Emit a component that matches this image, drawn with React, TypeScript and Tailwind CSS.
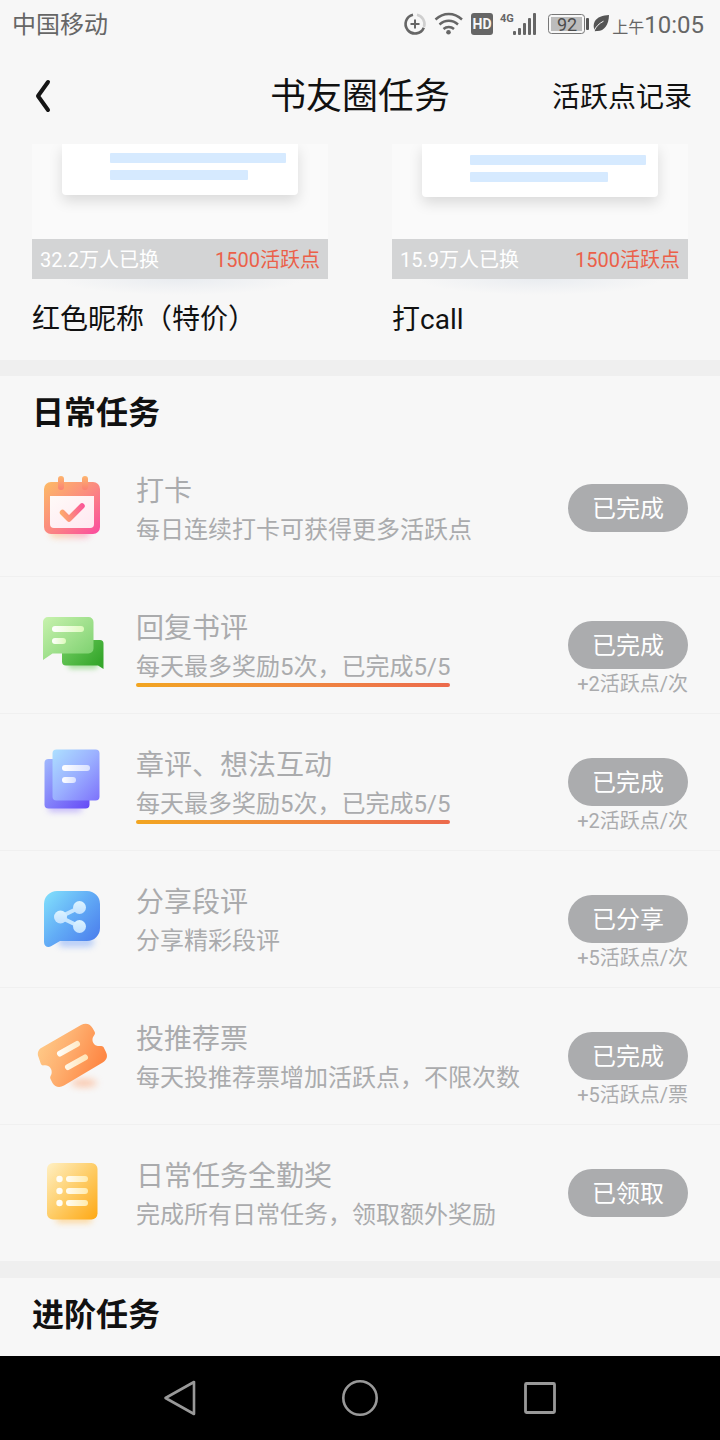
import type { ReactNode } from "react";

type Task = {
  title: string;
  detail: string;
  status: string;
  reward?: string;
  underlined?: boolean;
  icon: ReactNode;
};

function CalendarIcon() {
  return (
    <svg viewBox="0 0 96 96" className="size-24 shrink-0" aria-hidden="true">
      <defs>
        <linearGradient id="cal-body" x1="0" y1="0" x2="1" y2="1">
          <stop offset="0" stopColor="#fdbb65" />
          <stop offset="0.5" stopColor="#fb8a80" />
          <stop offset="1" stopColor="#fb4aa0" />
        </linearGradient>
        <linearGradient id="cal-page" x1="0" y1="0" x2="1" y2="1">
          <stop offset="0" stopColor="#fffaf8" />
          <stop offset="1" stopColor="#ffe8f1" />
        </linearGradient>
        <linearGradient id="cal-ring" x1="0" y1="0" x2="0" y2="1">
          <stop offset="0" stopColor="#fdb56e" />
          <stop offset="1" stopColor="#fb8173" />
        </linearGradient>
        <linearGradient id="cal-shade" x1="0" y1="0" x2="1" y2="0">
          <stop offset="0" stopColor="#fdc580" />
          <stop offset="1" stopColor="#fb8ab5" />
        </linearGradient>
        <linearGradient id="cal-check" gradientUnits="userSpaceOnUse" x1="36" y1="52" x2="60" y2="46">
          <stop offset="0" stopColor="#fdac6c" />
          <stop offset="1" stopColor="#fb5598" />
        </linearGradient>
        <filter id="cal-blur" x="-30%" y="-60%" width="160%" height="240%">
          <feGaussianBlur stdDeviation="3" />
        </filter>
      </defs>
      <rect x="26" y="68" width="40" height="10" rx="5" fill="url(#cal-shade)" opacity="0.6" filter="url(#cal-blur)" />
      <rect x="20" y="22" width="56" height="52" rx="7" fill="url(#cal-body)" />
      <path d="M26 36h44v28a4 4 0 0 1-4 4H30a4 4 0 0 1-4-4z" fill="url(#cal-page)" />
      <rect x="34" y="16" width="6" height="14" rx="3" fill="url(#cal-ring)" />
      <rect x="58" y="16" width="6" height="14" rx="3" fill="url(#cal-ring)" />
      <path d="M38.500 52.500l6.500 6.500 13-13" fill="none" stroke="url(#cal-check)" strokeWidth="5.500" strokeLinecap="round" strokeLinejoin="round" />
    </svg>
  );
}

function ReplyIcon() {
  return (
    <svg viewBox="0 -3 96 96" className="size-24 shrink-0" aria-hidden="true">
      <defs>
        <linearGradient id="rep-front" x1="0" y1="0" x2="1" y2="1">
          <stop offset="0" stopColor="#c8f2ae" />
          <stop offset="1" stopColor="#79cf6c" />
        </linearGradient>
        <linearGradient id="rep-back" x1="0" y1="0" x2="1" y2="0.600">
          <stop offset="0" stopColor="#72cd62" />
          <stop offset="1" stopColor="#36a72c" />
        </linearGradient>
        <linearGradient id="rep-line" x1="0" y1="0" x2="1" y2="0">
          <stop offset="0" stopColor="#ffffff" />
          <stop offset="1" stopColor="#ddfabb" />
        </linearGradient>
        <filter id="rep-blur" x="-30%" y="-80%" width="160%" height="260%">
          <feGaussianBlur stdDeviation="2.500" />
        </filter>
      </defs>
      <rect x="44" y="60" width="30" height="9" rx="4" fill="#8fd783" opacity="0.700" filter="url(#rep-blur)" />
      <path d="M41 40h35a3.500 3.500 0 0 1 3.500 3.500V69L74 65.500H42a4 4 0 0 1-4-4V43a3 3 0 0 1 3-3z" fill="url(#rep-back)" />
      <path d="M24 17h40.500a5 5 0 0 1 5 5v26.500a5 5 0 0 1-5 5H28.500L19 60V22a5 5 0 0 1 5-5z" fill="url(#rep-front)" />
      <rect x="28" y="26" width="32" height="6" rx="3" fill="url(#rep-line)" />
      <rect x="28" y="38" width="14" height="6" rx="3" fill="url(#rep-line)" />
    </svg>
  );
}

function ChapterIcon() {
  return (
    <svg viewBox="0 -1 96 96" className="size-24 shrink-0" aria-hidden="true">
      <defs>
        <linearGradient id="chap-front" x1="0" y1="0" x2="1" y2="1">
          <stop offset="0" stopColor="#ade0ff" />
          <stop offset="0.500" stopColor="#9bb0ff" />
          <stop offset="1" stopColor="#7d72fb" />
        </linearGradient>
        <linearGradient id="chap-back" x1="0" y1="0" x2="1" y2="1">
          <stop offset="0" stopColor="#a1b9fd" />
          <stop offset="1" stopColor="#6549f6" />
        </linearGradient>
        <linearGradient id="chap-line" x1="0" y1="0" x2="1" y2="0">
          <stop offset="0" stopColor="#ffffff" />
          <stop offset="1" stopColor="#d8e0ff" />
        </linearGradient>
        <filter id="chap-blur" x="-30%" y="-80%" width="160%" height="260%">
          <feGaussianBlur stdDeviation="3" />
        </filter>
      </defs>
      <rect x="24" y="69" width="34" height="8" rx="4" fill="#b0a0fb" opacity="0.700" filter="url(#chap-blur)" />
      <rect x="20.500" y="24" width="45" height="49.500" rx="4" fill="url(#chap-back)" />
      <rect x="28.500" y="14.500" width="47" height="51" rx="4" fill="url(#chap-front)" />
      <rect x="38" y="30" width="28" height="6" rx="3" fill="url(#chap-line)" />
      <rect x="38" y="42" width="14" height="6" rx="3" fill="url(#chap-line)" />
    </svg>
  );
}

function ShareIcon() {
  return (
    <svg viewBox="0 -1 96 96" className="size-24 shrink-0" aria-hidden="true">
      <defs>
        <linearGradient id="share-body" x1="0" y1="0" x2="1" y2="0.900">
          <stop offset="0" stopColor="#83e2fc" />
          <stop offset="0.500" stopColor="#62acf6" />
          <stop offset="1" stopColor="#4a7bec" />
        </linearGradient>
        <linearGradient id="share-node" x1="0" y1="0" x2="0" y2="1">
          <stop offset="0" stopColor="#dcf3ff" />
          <stop offset="1" stopColor="#c2e1ff" />
        </linearGradient>
        <filter id="share-blur" x="-30%" y="-80%" width="160%" height="260%">
          <feGaussianBlur stdDeviation="3" />
        </filter>
      </defs>
      <rect x="34" y="65" width="36" height="10" rx="5" fill="#9cbcf8" opacity="0.700" filter="url(#share-blur)" />
      <path d="M33 19h30a13 13 0 0 1 13 13v24a13 13 0 0 1-13 13H36l-9 5.200C24 76 20 74.500 20 70V32a13 13 0 0 1 13-13z" fill="url(#share-body)" />
      <path d="M55.500 35.500L36 45l19.500 9.500" fill="none" stroke="#c6e6ff" strokeWidth="4" />
      <circle cx="55.500" cy="35.500" r="6.500" fill="url(#share-node)" />
      <circle cx="36.500" cy="45" r="6.500" fill="url(#share-node)" />
      <circle cx="55.500" cy="54.500" r="6.500" fill="url(#share-node)" />
    </svg>
  );
}

function TicketIcon() {
  return (
    <svg viewBox="0 0 96 96" className="size-24 shrink-0" aria-hidden="true">
      <defs>
        <linearGradient id="tick-body" x1="0" y1="0" x2="1" y2="0.400">
          <stop offset="0" stopColor="#ffd28f" />
          <stop offset="0.500" stopColor="#feb070" />
          <stop offset="1" stopColor="#fe8845" />
        </linearGradient>
        <linearGradient id="tick-line" gradientUnits="userSpaceOnUse" x1="34" y1="50" x2="64" y2="50">
          <stop offset="0" stopColor="#fffdf8" />
          <stop offset="1" stopColor="#ffe3b4" />
        </linearGradient>
        <filter id="tick-blur" x="-40%" y="-80%" width="180%" height="260%">
          <feGaussianBlur stdDeviation="3.500" />
        </filter>
      </defs>
      <ellipse cx="60" cy="75" rx="13" ry="4" fill="#fda87a" opacity="0.600" filter="url(#tick-blur)" />
      <path
        d="M18 39.500L57 17c4.500-2.500 9-1.500 11.500 3l2 3.500c1 2 .5 2.800-.8 4.500-2.500 3.500-1 8.500 3.300 9.800 2.300.7 4.500-.8 6.500 1.200l2.200 4.500c2.500 4.500 1.300 8.500-3 11L40 77.500c-4.500 2.600-9 1.500-11.500-2.500l-2-4c-1-2 .3-3 1-5 1.300-5-2.500-9.500-7.500-8.700-2 .3-2.500-.3-3.300-1.800L14.500 49c-1.500-3.500-.5-7.500 3.500-9.500z"
        fill="url(#tick-body)"
      />
      <path d="M36 45.500L53 36M44 59L61 49.500" stroke="url(#tick-line)" strokeWidth="6" strokeLinecap="round" />
    </svg>
  );
}

function ListIcon() {
  return (
    <svg viewBox="0 0 96 96" className="size-24 shrink-0" aria-hidden="true">
      <defs>
        <linearGradient id="list-body" x1="0" y1="0" x2="1" y2="1">
          <stop offset="0" stopColor="#fff0c4" />
          <stop offset="0.500" stopColor="#fecd68" />
          <stop offset="1" stopColor="#fea814" />
        </linearGradient>
        <linearGradient id="list-line" gradientUnits="userSpaceOnUse" x1="42" y1="0" x2="64" y2="0">
          <stop offset="0" stopColor="#fffdf5" />
          <stop offset="1" stopColor="#ffebae" />
        </linearGradient>
        <filter id="list-blur" x="-30%" y="-80%" width="160%" height="260%">
          <feGaussianBlur stdDeviation="3" />
        </filter>
      </defs>
      <rect x="32" y="70" width="36" height="8" rx="4" fill="#fecb78" opacity="0.700" filter="url(#list-blur)" />
      <rect x="23" y="18" width="50.500" height="56.500" rx="6" fill="url(#list-body)" />
      {[34, 46, 58].map((y) => (
        <g key={y}>
          <circle cx="35.500" cy={y} r="3.200" fill="#fffdf5" />
          <rect x="42" y={y - 3} width="22" height="6" rx="3" fill="url(#list-line)" />
        </g>
      ))}
    </svg>
  );
}

const tasks: Task[] = [
  { title: "打卡", detail: "每日连续打卡可获得更多活跃点", status: "已完成", icon: <CalendarIcon /> },
  { title: "回复书评", detail: "每天最多奖励5次，已完成5/5", status: "已完成", reward: "+2活跃点/次", underlined: true, icon: <ReplyIcon /> },
  { title: "章评、想法互动", detail: "每天最多奖励5次，已完成5/5", status: "已完成", reward: "+2活跃点/次", underlined: true, icon: <ChapterIcon /> },
  { title: "分享段评", detail: "分享精彩段评", status: "已分享", reward: "+5活跃点/次", icon: <ShareIcon /> },
  { title: "投推荐票", detail: "每天投推荐票增加活跃点，不限次数", status: "已完成", reward: "+5活跃点/票", icon: <TicketIcon /> },
  { title: "日常任务全勤奖", detail: "完成所有日常任务，领取额外奖励", status: "已领取", icon: <ListIcon /> },
];

function StatusBar() {
  return (
    <div className="flex h-12 items-center justify-between pr-4 pl-3 text-[#666]">
      <span className="pt-0.5 text-2xl">中国移动</span>
      <div className="flex items-center">
        <svg viewBox="0 0 208 30" className="h-[30px] w-[208px]" aria-hidden="true">
          <g fill="none" stroke="#666" strokeWidth="2.600">
            <path d="M11 5.700a9.500 9.500 0 1 0 10.800 13" />
            <path d="M15 5.700a9.500 9.500 0 0 1 7 12.300" stroke="#cfcfcf" />
            <path d="M13 10.500v9M8.500 15h9" strokeWidth="2" />
            <path d="M33.500 10.500c8-7.300 18.500-7.300 26.500 0" strokeWidth="2.400" />
            <path d="M37.500 15.500c5.500-5 13-5 18.500 0" strokeWidth="2.400" />
            <path d="M41.500 20c3-2.700 7.500-2.700 10.500 0" strokeWidth="2.400" />
          </g>
          <circle cx="46.500" cy="23.300" r="2.300" fill="#666" />
          <rect x="69" y="4" width="22" height="22" rx="3" fill="#666" />
          <text x="80" y="20" textAnchor="middle" fill="#f7f7f7" fontFamily="Roboto, sans-serif" fontWeight="700" fontSize="14">HD</text>
          <text x="98" y="13" fill="#666" fontFamily="Roboto, sans-serif" fontWeight="700" fontSize="11">4G</text>
          <g fill="#666">
            <rect x="111" y="22" width="3" height="4" rx="1" />
            <rect x="116" y="19" width="3" height="7" rx="1" />
            <rect x="121" y="14" width="3" height="12" rx="1" />
            <rect x="126" y="9" width="3" height="17" rx="1" />
            <rect x="131" y="4" width="3" height="22" rx="1" />
          </g>
          <rect x="146.500" y="5.500" width="36" height="19" rx="3" fill="none" stroke="#777" />
          <rect x="149" y="8" width="31" height="14" fill="#bcbcbc" />
          <rect x="184" y="9" width="3" height="12" rx="1" fill="#555" />
          <text x="165" y="21.500" textAnchor="middle" fill="#4c4c4c" fontFamily="Roboto, sans-serif" fontSize="18">92</text>
          <path d="M207 6c-6 .3-12 2-14.300 6.500-1.500 3-1.200 6-.2 8.500l.3 1.200 2-.2c7 .5 12-5.500 12.200-16z" fill="#555" />
          <path d="M192 22c2-4.500 5-7.500 9.500-9.800" fill="none" stroke="#f7f7f7" strokeWidth="1" />
        </svg>
        <span className="pt-0.5 pl-0.5 text-base leading-7">
          上午<span className="text-2xl">10:05</span>
        </span>
      </div>
    </div>
  );
}

function RewardCard({ name, count, tall }: { name: string; count: string; tall?: boolean }) {
  return (
    <article className="flex-1">
      <div className="overflow-hidden bg-[#fafafa] px-[30px] pb-11">
        <div className={`rounded-b bg-white pl-12 shadow-[0_6px_14px_rgba(0,0,0,0.13)] ${tall ? "-mb-0.5 h-[53px] pt-[11px]" : "h-[51px] pt-[9px]"}`}>
          <div className="h-[10px] w-44 rounded-[1px] bg-[#d6eaff]" />
          <div className="mt-[7px] h-[10px] w-[138px] rounded-[1px] bg-[#d6eaff]" />
        </div>
      </div>
      <div className="flex h-10 items-center justify-between bg-[#d3d4d5] px-2 pt-0.5 text-xl">
        <span className="text-white">{count}人已换</span>
        <span className="text-[#eb6049]">1500活跃点</span>
      </div>
      <div className="mx-6 h-4 bg-radial-[at_50%_0%] from-[#e9ecf0] to-[#f7f7f7] to-70%" />
      <h3 className="pt-[5px] text-[28px] leading-10 text-[#111]">{name}</h3>
    </article>
  );
}

function TaskRow({ task }: { task: Task }) {
  return (
    <li className="flex items-start gap-4 border-b border-[#f0f0f0] pr-8 pl-6 last:border-[#efefef]">
      <div className="py-5">{task.icon}</div>
      <div className="min-w-0 flex-1 pt-[34px] text-[#aaabad]">
        <h3 className="text-[28px] leading-9">{task.title}</h3>
        <p className="text-2xl leading-10">
          <span className="inline-block">
            {task.detail}
            {task.underlined && <span className="-mt-1 block h-1 rounded-full bg-linear-to-r from-[#f2a51f] to-[#ec6a4c]" />}
          </span>
        </p>
      </div>
      <div className="flex shrink-0 flex-col items-end pt-11">
        <button type="button" className="h-12 w-[120px] rounded-full bg-[#abacae] pt-0.5 text-2xl text-white">
          {task.status}
        </button>
        {task.reward && <span className="text-xl leading-[30px] text-[#aaabad]">{task.reward}</span>}
      </div>
    </li>
  );
}

export default function App() {
  return (
    <div className="flex min-h-screen flex-col bg-[#f7f7f7] font-['Roboto','Noto_Sans_CJK_SC',sans-serif]" lang="zh-CN">
      <StatusBar />
      <header className="grid h-24 grid-cols-[1fr_auto_1fr] items-center px-7">
        <button type="button" aria-label="返回" className="justify-self-start">
          <svg viewBox="0 0 30 40" className="h-10 w-[30px]" aria-hidden="true">
            <path d="M20 6L10 20l10 14" fill="none" stroke="#151515" strokeWidth="4" strokeLinecap="round" strokeLinejoin="round" />
          </svg>
        </button>
        <h1 className="pt-0.5 text-4xl text-[#111]">书友圈任务</h1>
        <a href="#records" className="justify-self-end pt-1 text-[28px] text-[#111]">活跃点记录</a>
      </header>
      <main className="flex-1">
        <section className="flex gap-16 px-8 pb-5">
          <RewardCard name="红色昵称（特价）" count="32.2万" />
          <RewardCard name="打call" count="15.9万" tall />
        </section>
        <section className="border-t-16 border-[#efefef]">
          <h2 className="h-16 px-8 pt-[17px] text-[32px] leading-10 font-bold text-[#111]">日常任务</h2>
          <ul>
            {tasks.map((task) => (
              <TaskRow key={task.title} task={task} />
            ))}
          </ul>
        </section>
        <section className="border-t-16 border-[#efefef]">
          <h2 className="px-8 pt-[17px] pb-[19px] text-[32px] leading-10 font-bold text-[#111]">进阶任务</h2>
        </section>
      </main>
      <nav className="flex h-[84px] items-center justify-center gap-[140px] bg-black">
        <button type="button" aria-label="后退">
          <svg viewBox="0 0 40 40" className="size-10" fill="none" stroke="#999" strokeWidth="2.600" strokeLinejoin="round" aria-hidden="true">
            <path d="M34 4v32L5.500 20z" />
          </svg>
        </button>
        <button type="button" aria-label="主屏幕">
          <svg viewBox="0 0 40 40" className="size-10" fill="none" stroke="#999" strokeWidth="2.600" aria-hidden="true">
            <circle cx="20" cy="20" r="16.700" />
          </svg>
        </button>
        <button type="button" aria-label="最近任务">
          <svg viewBox="0 0 40 40" className="size-10" fill="none" stroke="#999" strokeWidth="2.800" strokeLinejoin="round" aria-hidden="true">
            <rect x="5.500" y="5.500" width="29" height="29" rx="1" />
          </svg>
        </button>
      </nav>
    </div>
  );
}
